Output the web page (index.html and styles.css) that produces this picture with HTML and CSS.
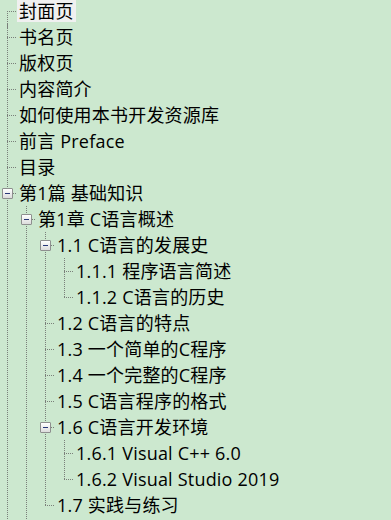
FILE: index.html
```html
<!DOCTYPE html>
<html lang="zh-CN">
<head>
<meta charset="utf-8">
<title>目录树</title>
<link rel="stylesheet" href="styles.css">
</head>
<body>
<ul class="tree root">
  <li><div class="row"><span class="tw"></span><span class="label sel">封面页</span></div></li>
  <li><div class="row"><span class="tw"></span><span class="label">书名页</span></div></li>
  <li><div class="row"><span class="tw"></span><span class="label">版权页</span></div></li>
  <li><div class="row"><span class="tw"></span><span class="label">内容简介</span></div></li>
  <li><div class="row"><span class="tw"></span><span class="label">如何使用本书开发资源库</span></div></li>
  <li><div class="row"><span class="tw"></span><span class="label">前言 Preface</span></div></li>
  <li><div class="row"><span class="tw"></span><span class="label">目录</span></div></li>
  <li>
    <div class="row"><span class="tw"><span class="box"></span></span><span class="label">第1篇 基础知识</span></div>
    <ul class="tree">
      <li>
        <div class="row"><span class="tw"><span class="box"></span></span><span class="label">第1章 C语言概述</span></div>
        <ul class="tree">
          <li>
            <div class="row"><span class="tw"><span class="box"></span></span><span class="label">1.1 C语言的发展史</span></div>
            <ul class="tree">
              <li><div class="row"><span class="tw"></span><span class="label">1.1.1 程序语言简述</span></div></li>
              <li class="last"><div class="row"><span class="tw"></span><span class="label">1.1.2 C语言的历史</span></div></li>
            </ul>
          </li>
          <li><div class="row"><span class="tw"></span><span class="label">1.2 C语言的特点</span></div></li>
          <li><div class="row"><span class="tw"></span><span class="label">1.3 一个简单的C程序</span></div></li>
          <li><div class="row"><span class="tw"></span><span class="label">1.4 一个完整的C程序</span></div></li>
          <li><div class="row"><span class="tw"></span><span class="label">1.5 C语言程序的格式</span></div></li>
          <li>
            <div class="row"><span class="tw"><span class="box"></span></span><span class="label">1.6 C语言开发环境</span></div>
            <ul class="tree">
              <li><div class="row"><span class="tw"></span><span class="label">1.6.1 Visual C++ 6.0</span></div></li>
              <li class="last"><div class="row"><span class="tw"></span><span class="label">1.6.2 Visual Studio 2019</span></div></li>
            </ul>
          </li>
          <li class="last"><div class="row"><span class="tw"></span><span class="label">1.7 实践与练习</span></div></li>
        </ul>
      </li>
    </ul>
  </li>
</ul>
</body>
</html>
```

FILE: styles.css
```css
html, body {
  margin: 0;
  padding: 0;
  background: #cce8cf;
  height: 520px;
  overflow: hidden;
}
body {
  font-family: "Open Sans", "Noto Sans CJK SC", sans-serif;
  font-size: 18px;
  letter-spacing: 0.2px;
  color: #000;
}
.tree {
  list-style: none;
  margin: 0;
  padding: 0;
}
.root {
  margin-top: -2px;
  padding-bottom: 4px;
}
.tree .tree {
  margin-left: 19px;
}
.tree li {
  position: relative;
}
.tree li::before {
  content: "";
  position: absolute;
  left: 7px;
  top: 0;
  bottom: -4px;
  width: 1px;
  background: repeating-linear-gradient(to bottom, #7a7f7a 0 1px, transparent 1px 2px);
}
.root > li:first-child::before {
  top: 13px;
}
.tree li.last::before {
  bottom: auto;
  height: 14px;
}
.tree li::after {
  content: "";
  position: absolute;
  left: 7px;
  top: 13px;
  width: 10px;
  height: 1px;
  background: repeating-linear-gradient(to right, #7a7f7a 0 1px, transparent 1px 2px);
}
.row {
  position: relative;
  z-index: 1;
  display: flex;
  align-items: center;
  height: 26px;
}
.tw {
  flex: none;
  width: 17px;
  height: 26px;
  display: flex;
  align-items: center;
}
.box {
  position: relative;
  box-sizing: border-box;
  width: 11px;
  height: 11px;
  margin-left: 2px;
  border: 1px solid #8e8f8f;
  border-radius: 1px;
  background: linear-gradient(to bottom, #ffffff, #dcdcdc);
}
.box::after {
  content: "";
  position: absolute;
  left: 2px;
  top: 4px;
  width: 5px;
  height: 1px;
  background: #283878;
}
.label {
  white-space: nowrap;
  height: 22px;
  line-height: 22px;
  padding: 0 2px;
}
.label.sel {
  background: #f0f0f0;
}
```
